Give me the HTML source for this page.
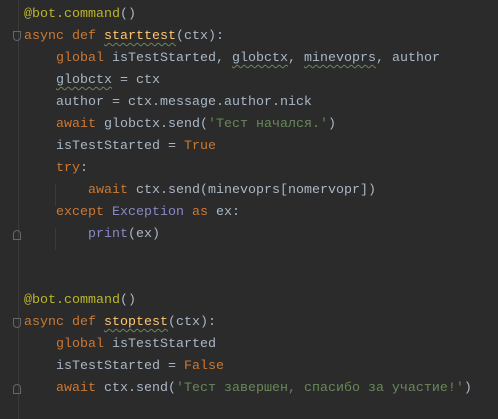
<!DOCTYPE html>
<html><head><style>
body{margin:0;width:498px;height:419px;background:#2b2b2b;overflow:hidden;position:relative}
.g{position:absolute;left:0;top:0;width:18px;height:419px;background:#2b2b2b;border-right:1px solid #3a3a3a}
pre{position:absolute;left:24px;top:4px;margin:0;font-family:"Liberation Mono","DejaVu Sans Mono",monospace;font-size:13.33px;line-height:22px;color:#a9b7c6}
.k{color:#cc7832}.d{color:#bbb529}.f{color:#ffc66d}.s{color:#6a8759}.b{color:#8888c6}
.w{text-decoration:underline wavy #6a8759;text-decoration-thickness:1px;text-underline-offset:3px}
.ig{position:absolute;width:1px;background:#3b3b3b}
.fm{position:absolute;left:13px;width:8px;height:10px;border:1px solid #666;box-sizing:border-box}
</style></head><body>
<div class="g"></div>
<div class="ig" style="left:55px;top:184px;height:22px"></div>
<div class="ig" style="left:55px;top:228px;height:22px"></div>
<div class="fm" style="top:31px;border-radius:0 0 4px 4px"></div>
<div class="fm" style="top:230px;border-radius:4px 4px 0 0"></div>
<div class="fm" style="top:318px;border-radius:0 0 4px 4px"></div>
<div class="fm" style="top:384px;border-radius:4px 4px 0 0"></div>
<pre><span class="d">@bot.command</span>()
<span class="k">async def </span><span class="f w">starttest</span>(ctx):
    <span class="k">global </span>isTestStarted, <span class="w">globctx</span>, <span class="w">minevoprs</span>, author
    <span class="w">globctx</span> = ctx
    author = ctx.message.author.nick
    <span class="k">await </span>globctx.send(<span class="s">'Тест начался.'</span>)
    isTestStarted = <span class="k">True</span>
    <span class="k">try</span>:
        <span class="k">await </span>ctx.send(minevoprs[nomervopr])
    <span class="k">except </span><span class="b">Exception</span> <span class="k">as </span>ex:
        <span class="b">print</span>(ex)


<span class="d">@bot.command</span>()
<span class="k">async def </span><span class="f w">stoptest</span>(ctx):
    <span class="k">global </span>isTestStarted
    isTestStarted = <span class="k">False</span>
    <span class="k">await </span>ctx.send(<span class="s">'Тест завершен, спасибо за участие!'</span>)</pre>
</body></html>
